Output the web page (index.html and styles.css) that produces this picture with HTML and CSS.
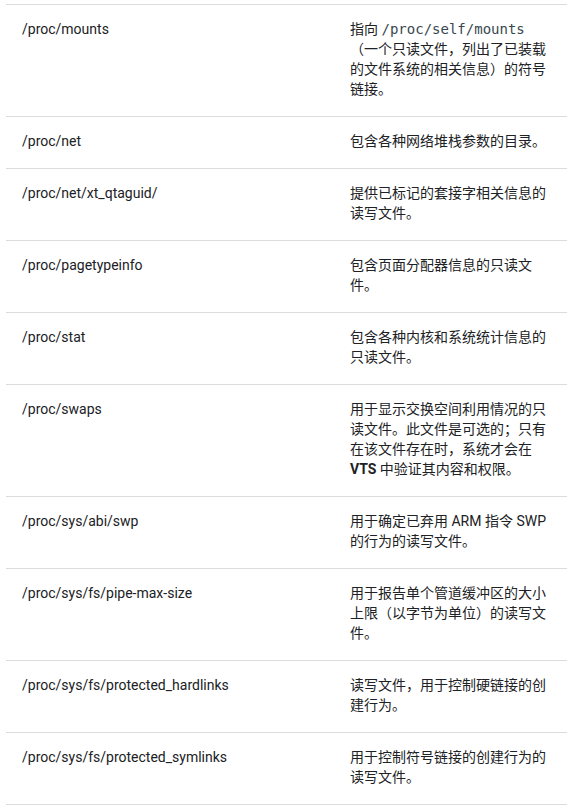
FILE: index.html
```html
<!DOCTYPE html>
<html lang="zh-CN">
<head>
<meta charset="utf-8">
<link rel="stylesheet" href="styles.css">
</head>
<body>
<div class="wrap">
<table class="props">
<tbody>
<tr><td class="path">/proc/mounts</td><td class="desc">指向 <code>/proc/self/mounts</code>（一个只读文件，列出了已装载的文件系统的相关信息）的符号链接。</td></tr>
<tr><td class="path">/proc/net</td><td class="desc">包含各种网络堆栈参数的目录。</td></tr>
<tr><td class="path">/proc/net/xt_qtaguid/</td><td class="desc">提供已标记的套接字相关信息的读写文件。</td></tr>
<tr><td class="path">/proc/pagetypeinfo</td><td class="desc">包含页面分配器信息的只读文件。</td></tr>
<tr><td class="path">/proc/stat</td><td class="desc">包含各种内核和系统统计信息的只读文件。</td></tr>
<tr><td class="path">/proc/swaps</td><td class="desc">用于显示交换空间利用情况的只读文件。此文件是可选的；只有在该文件存在时，系统才会在 <strong>VTS</strong> 中验证其内容和权限。</td></tr>
<tr><td class="path">/proc/sys/abi/swp</td><td class="desc">用于确定已弃用 ARM 指令 SWP 的行为的读写文件。</td></tr>
<tr><td class="path">/proc/sys/fs/pipe-max-size</td><td class="desc">用于报告单个管道缓冲区的大小上限（以字节为单位）的读写文件。</td></tr>
<tr><td class="path">/proc/sys/fs/protected_hardlinks</td><td class="desc">读写文件，用于控制硬链接的创建行为。</td></tr>
<tr><td class="path">/proc/sys/fs/protected_symlinks</td><td class="desc">用于控制符号链接的创建行为的读写文件。</td></tr>
</tbody>
</table>
</div>
</body>
</html>
```

FILE: styles.css
```css
html, body {
  margin: 0;
  padding: 0;
  background: #ffffff;
}
.wrap {
  padding: 4px 12px 0 6px;
}
.props {
  width: 561px;
  border-collapse: collapse;
  table-layout: fixed;
  font-family: Roboto, "Noto Sans CJK SC", sans-serif;
  font-size: 14px;
  line-height: 20px;
  color: #202124;
}
.props td {
  border-top: 1px solid #dadce0;
  border-bottom: 1px solid #dadce0;
  padding: 14px 16px 17px 16px;
  vertical-align: top;
}
.props td.path {
  width: 296px;
}
.props td.desc {
  width: 201px;
}
.props code {
  font-family: "DejaVu Sans Mono", "Liberation Mono", monospace;
  font-size: 14px;
  line-height: 1;
  font-weight: 400;
  color: #37474f;
}
.props strong {
  font-weight: 700;
}
```
